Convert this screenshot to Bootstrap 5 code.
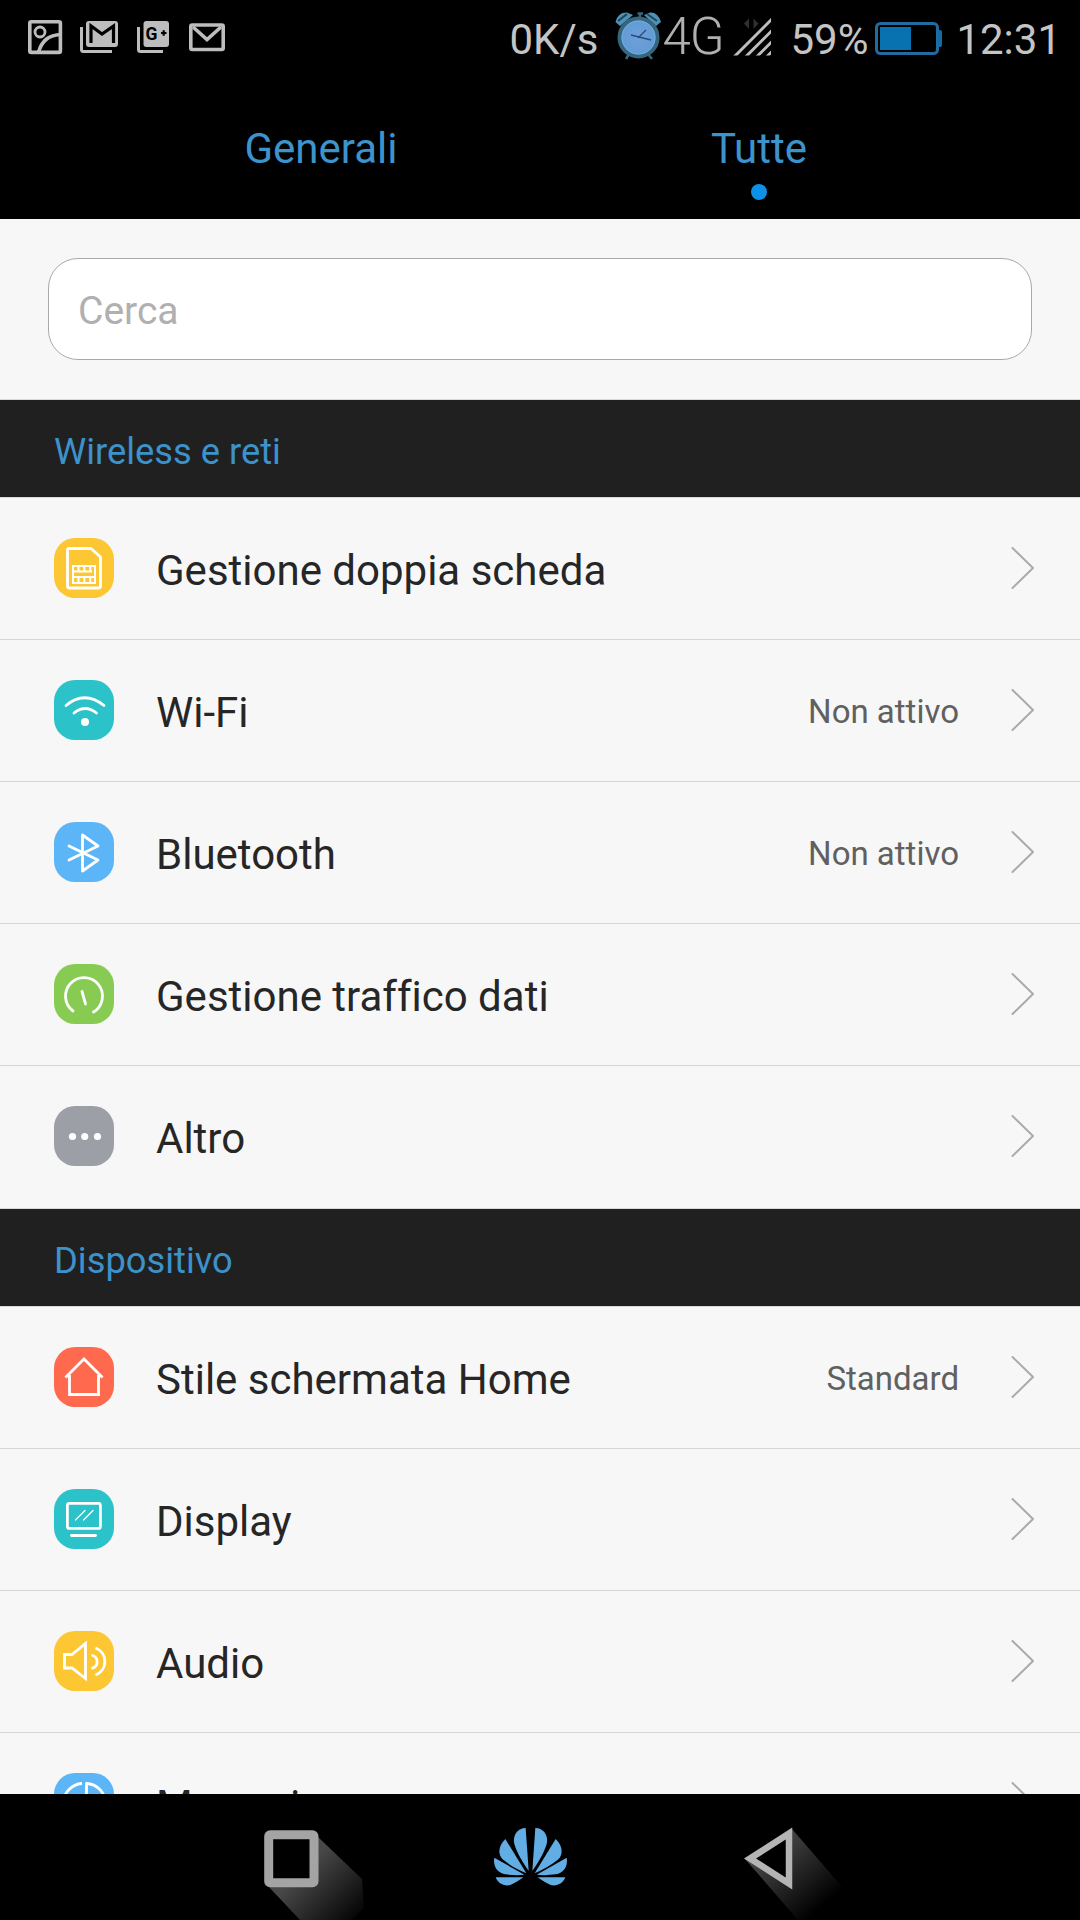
<!DOCTYPE html>
<html lang="it">
<head>
<meta charset="utf-8">
<meta name="viewport" content="width=device-width, initial-scale=1">
<title>Impostazioni</title>
<link href="https://cdn.jsdelivr.net/npm/bootstrap@5.3.0/dist/css/bootstrap.min.css" rel="stylesheet">
<style>
body{font-family:Roboto,"Noto Sans",sans-serif;background:#000;font-size:42px;line-height:50px;font-variant-ligatures:none}
svg{display:block;flex:none}
.screen{width:1080px;height:1920px}
.statusbar{height:80px;color:#c4c4c4;padding:0 19px 0 28px;background:#000}
.status-text{line-height:50px;margin-top:15px;white-space:nowrap}
.percent{margin-left:18px}
.battery{margin-left:7px}
.clock{margin-left:13px}
.network{font-size:51px;font-weight:300;line-height:50px;margin:12px 0 0 -2px;color:#b0b0b0;width:59px;letter-spacing:-1px}
.tabs{height:139px;padding:0 102px;background:#000}
.tabs .nav-link{color:#3d93cc;padding:44px 0 0;line-height:50px}
.tab-dot{width:16px;height:16px;background:#0b92e8;margin-top:10px}
.content-area{background:#f7f7f7;min-height:0}
.search{padding:39px 48px}
.search .form-control{height:102px;border:1px solid #a9a9a9;border-radius:30px;padding:3px 29px 0;font-size:39px;background:#fff}
.search .form-control::placeholder{color:#b0b0b0;opacity:1}
.section-title{height:99px;border-top:1px solid #d9d9d9;border-bottom:1px solid #d9d9d9;background:#202020;background-clip:padding-box;color:#3c92cb;font-size:36.3px;font-weight:400;padding:7px 54px 0;margin:0}
.list-group-item{height:142px;background:#f7f7f7;border:0;border-bottom:1px solid #d5d5d5;border-radius:0!important;padding:0 44px 1px 54px;color:#262626}
.list-group-item:last-child{padding-bottom:2px}
.tile{width:60px;height:60px;border-radius:21px;flex:none}
.tile svg{width:60px;height:60px;fill:none;stroke:#fff;stroke-width:2.8;stroke-linecap:round;stroke-linejoin:round}
.yellow{background:#fdc733}.teal{background:#2cc2ca}.sky{background:#5bb5f6}.green{background:#87cb53}.gray{background:#9d9fa7}.coral{background:#ff694d}
.item-label{margin-left:42px;padding-top:5px;white-space:nowrap}
.item-value{font-size:33px;color:#606060;padding-top:4px;margin-right:51px;white-space:nowrap}
.navkeys{height:126px;background:#000;padding-left:256px}
</style>
</head>
<body>
<svg width="0" height="0" class="position-absolute"><defs><symbol id="chevron" viewBox="0 0 26 44"><path d="M2.500 2 23 22 2.500 42" fill="none" stroke="#aaa" stroke-width="2" stroke-linecap="round" stroke-linejoin="round"/></symbol></defs></svg>
<div class="screen d-flex flex-column overflow-hidden">
  <header class="statusbar d-flex flex-shrink-0 align-items-start">
    <div class="d-flex">
      <svg width="35" height="80" viewBox="28 0 35 80" fill="none" stroke="#bdbdbd" stroke-width="3.6"><rect x="29.8" y="21.8" width="30.6" height="30.6" rx="1.5"/><circle cx="40" cy="32" r="5" stroke-width="2.8"/><path d="M38.5 52C42 41 48 35.500 60 34.500"/></svg>
      <svg width="57" height="80" viewBox="63 0 57 80"><path d="M81.500 27V49.500Q81.500 51.500 83.500 51.500H112" fill="none" stroke="#bdbdbd" stroke-width="3"/><rect x="86" y="21" width="32" height="26" rx="3" fill="#bdbdbd"/><path d="M91 43V26L102 34 113.500 26V43" fill="none" stroke="#000" stroke-width="3.200"/></svg>
      <svg width="52" height="80" viewBox="120 0 52 80"><path d="M138.500 27V49.500Q138.500 51.500 140.500 51.500H163" fill="none" stroke="#bdbdbd" stroke-width="3"/><rect x="143.500" y="21" width="25.500" height="26" rx="3" fill="#bdbdbd"/><text x="145.500" y="40" font-family="Roboto" font-weight="700" font-size="17.500">G</text><path d="M161 33H166.500M163.700 30.300V35.700" stroke="#000" stroke-width="2.200"/></svg>
      <svg class="ms-3" width="38" height="80" viewBox="188 0 38 80" fill="none" stroke="#bdbdbd" stroke-width="3.600"><rect x="190.800" y="25" width="32.400" height="24.500" rx="1.500"/><path d="M193 27 207 39.500 221 27"/></svg>
    </div>
    <div class="d-flex ms-auto">
      <span class="status-text">0K/s</span>
      <svg class="ms-3" width="50" height="80" viewBox="613 0 50 80"><defs><radialGradient id="face"><stop offset="0" stop-color="#6fa0dc"/><stop offset="1" stop-color="#619bd3"/></radialGradient></defs><path d="M628 54 625 59M647 54 651 59M639 13V18M636.500 13.500H642" stroke="#38657e" stroke-width="2.500"/><path d="M614.500 22Q617 12 626 12.500L632 15 619 26ZM660 22Q657 12 649 12.500L643 15 655 26Z" fill="#4e91b7"/><path d="M617 21 626 14M646 14 656 21" stroke="#20445a" stroke-width="2"/><circle cx="637.500" cy="37.500" r="19" fill="url(#face)" stroke="#36667d" stroke-width="4"/><circle cx="637.500" cy="37.500" r="16.500" fill="none" stroke="#6db1df"/><path d="M630 35 650 40M637 38 645 30" stroke="#294d77" stroke-width="1.300"/></svg>
      <span class="network">4G</span>
      <svg class="ms-2" width="43" height="80" viewBox="730 0 43 80"><path d="M745 23.500 750 18.500V29ZM759.500 23.500 754.500 18.500V29Z" fill="#303030"/><clipPath id="sig"><path d="M730 18H772V55.500H730Z"/></clipPath><path d="M735 57 775 17M746.500 57 775 28.500M757.500 57 775 39.500M767.500 57 775 49.500" stroke="#bdbdbd" stroke-width="3" clip-path="url(#sig)"/></svg>
      <span class="status-text percent">59%</span>
      <svg class="battery" width="68" height="80" viewBox="875 0 68 80"><rect x="876.500" y="23.500" width="61" height="30" rx="4" fill="none" stroke="#216b9e" stroke-width="3"/><rect x="880" y="27" width="31" height="23" fill="#0871b0"/><path d="M938 30H940Q942 30 942 32V45Q942 47 940 47H938Z" fill="#126ca7"/></svg>
      <span class="status-text clock">12:31</span>
    </div>
  </header>
  <nav class="tabs nav nav-justified flex-shrink-0">
    <a class="nav-link" href="#">Generali</a>
    <a class="nav-link d-flex flex-column align-items-center" href="#"><span>Tutte</span><span class="tab-dot rounded-circle"></span></a>
  </nav>
  <main class="content-area flex-grow-1 overflow-hidden">
    <div class="search"><input class="form-control" type="text" placeholder="Cerca" aria-label="Cerca"></div>
    <h2 class="section-title d-flex align-items-center">Wireless e reti</h2>
    <div class="list-group list-group-flush">
      <a class="list-group-item d-flex align-items-center" href="#"><span class="tile yellow"><svg viewBox="0 0 60 60"><path d="M15 10.500H37L46.500 19V48Q46.500 50 44.500 50H15.500Q13.500 50 13.500 48V12Q13.500 10.500 15 10.500Z"/><path d="M18 28H42M18 33.500H38M18 39H42M18 45H42M19 27.500V45M41 27.500V45M24.500 28V33M30.300 28V33M36.300 28V33M24.500 39V45M30.300 39V45M36.300 39V45" stroke-width="2" stroke-linecap="butt"/></svg></span><span class="item-label">Gestione doppia scheda</span><svg class="ms-auto" width="26" height="44"><use href="#chevron"/></svg></a>
      <a class="list-group-item d-flex align-items-center" href="#"><span class="tile teal"><svg viewBox="0 0 60 60"><path d="M12 25.500Q30.500 10 50 25.500M20 33Q31 24 42.500 33"/><circle cx="31" cy="42" r="4" fill="#fff" stroke="none"/></svg></span><span class="item-label">Wi-Fi</span><span class="item-value ms-auto">Non attivo</span><svg width="26" height="44"><use href="#chevron"/></svg></a>
      <a class="list-group-item d-flex align-items-center" href="#"><span class="tile sky"><svg viewBox="0 0 60 60"><path d="M15 24 44 38 28.500 49V13L44 24 15 38"/></svg></span><span class="item-label">Bluetooth</span><span class="item-value ms-auto">Non attivo</span><svg width="26" height="44"><use href="#chevron"/></svg></a>
      <a class="list-group-item d-flex align-items-center" href="#"><span class="tile green"><svg viewBox="0 0 60 60"><path d="M19 47A18.500 18.500 0 1 1 39.500 48M28 27.500 31.500 40"/></svg></span><span class="item-label">Gestione traffico dati</span><svg class="ms-auto" width="26" height="44"><use href="#chevron"/></svg></a>
      <a class="list-group-item d-flex align-items-center" href="#"><span class="tile gray"><svg viewBox="0 0 60 60"><g fill="#fff" stroke="none"><circle cx="18.500" cy="30.500" r="3.600"/><circle cx="30.700" cy="30.500" r="3.600"/><circle cx="43.500" cy="30.500" r="3.600"/></g></svg></span><span class="item-label">Altro</span><svg class="ms-auto" width="26" height="44"><use href="#chevron"/></svg></a>
    </div>
    <h2 class="section-title d-flex align-items-center">Dispositivo</h2>
    <div class="list-group list-group-flush">
      <a class="list-group-item d-flex align-items-center" href="#"><span class="tile coral"><svg viewBox="0 0 60 60"><path d="M11.500 30.500 30 12 48.500 30.500M15.500 28V47.500H44.500V28" stroke-linecap="butt" stroke-linejoin="miter"/></svg></span><span class="item-label">Stile schermata Home</span><span class="item-value ms-auto">Standard</span><svg width="26" height="44"><use href="#chevron"/></svg></a>
      <a class="list-group-item d-flex align-items-center" href="#"><span class="tile teal"><svg viewBox="0 0 60 60"><rect x="13.400" y="14.400" width="33" height="25" rx="2"/><path d="M17.500 46.500H41.500"/><path d="M21.500 31 31 21.500M29.500 31 39 21.500" stroke-width="1.200"/></svg></span><span class="item-label">Display</span><svg class="ms-auto" width="26" height="44"><use href="#chevron"/></svg></a>
      <a class="list-group-item d-flex align-items-center" href="#"><span class="tile yellow"><svg viewBox="0 0 60 60"><path d="M10.500 23.500H18L31.500 12.500V47.500L18 37H10.500Z" stroke-linejoin="miter"/><path d="M37.500 24C45 26 45 35.500 37.500 37.500M41.500 17C54 21.500 54 39.500 41.500 44" stroke-linecap="butt"/></svg></span><span class="item-label">Audio</span><svg class="ms-auto" width="26" height="44"><use href="#chevron"/></svg></a>
      <a class="list-group-item d-flex align-items-center" href="#"><span class="tile sky"><svg viewBox="0 0 60 60"><path d="M28 10.500A20 20 0 1 0 49 34M32.500 10.500V30H51.500A20 20 0 0 0 32.500 10.500Z" stroke-linecap="butt"/></svg></span><span class="item-label">Memoria</span><svg class="ms-auto" width="26" height="44"><use href="#chevron"/></svg></a>
    </div>
  </main>
  <footer class="navkeys d-flex flex-shrink-0">
    <svg width="124" height="126" viewBox="256 1794 124 126"><defs><linearGradient id="sh1" gradientUnits="userSpaceOnUse" x1="290" y1="1858" x2="352" y2="1920"><stop offset=".2" stop-color="#484848"/><stop offset="1" stop-color="#060606"/></linearGradient></defs><path d="M318 1837 362 1879 364 1908 352 1920H300L268 1886Z" fill="url(#sh1)"/><rect x="268.700" y="1834.700" width="45.300" height="48" rx="1.500" fill="#000" stroke="#a4a4a4" stroke-width="9"/></svg>
    <svg width="340" height="126" viewBox="380 1794 340 126"><g transform="translate(240 1790) scale(.33333)" fill="#62ade3"><g id="petals"><path d="M886 114C912 114 926 138 920 162 912 190 891 224 877 242Z"/><path d="M947 147C967 166 971 192 955 208 934 226 907 240 884 250Z"/><path d="M980 203C985 230 969 249 947 253 925 256 905 256 890 254Z"/><path d="M976 262C970 280 950 290 932 285 915 278 902 268 893 262Z"/></g><use href="#petals" transform="translate(1743) scale(-1 1)"/></g></svg>
    <svg width="160" height="126" viewBox="720 1794 160 126"><defs><linearGradient id="sh2" x1=".2" y1=".2" x2=".9" y2=".9"><stop offset="0" stop-color="#484848"/><stop offset=".85" stop-color="#000"/></linearGradient></defs><path d="M792 1829 850 1896 840 1920H798L745 1859Z" fill="url(#sh2)"/><path d="M750 1858.500 789 1833.500V1883.500Z" fill="#000" stroke="#b4b4b4" stroke-width="6.500"/></svg>
  </footer>
</div>
<script src="https://cdn.jsdelivr.net/npm/bootstrap@5.3.0/dist/js/bootstrap.bundle.min.js"></script>
</body>
</html>
